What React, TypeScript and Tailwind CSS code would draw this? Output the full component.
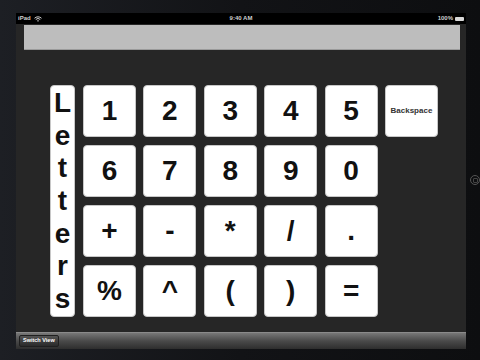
import React from 'react';

const keys = ['1', '2', '3', '4', '5', '6', '7', '8', '9', '0', '+', '-', '*', '/', '.', '%', '^', '(', ')', '='];
const letters = ['L', 'e', 't', 't', 'e', 'r', 's'];

const WifiIcon = () => (
  <svg width="8" height="6" viewBox="0 0 16 12" className="ml-[3px]">
    <path d="M1 4.5a10 10 0 0 1 14 0" stroke="#cfcfcf" strokeWidth="2" fill="none" />
    <path d="M3.5 7a6.5 6.5 0 0 1 9 0" stroke="#cfcfcf" strokeWidth="2" fill="none" />
    <path d="M8 11.5l-2.2-2.2a3.2 3.2 0 0 1 4.4 0z" fill="#cfcfcf" />
  </svg>
);

const Key = ({ label }: { label: string }) => (
  <button className="w-[53px] h-[52px] rounded-[4px] bg-white border border-[#c8c8c8] flex items-center justify-center text-[28px] font-bold text-[#111] leading-none">
    {label}
  </button>
);

export default function App() {
  return (
    <div
      className="w-[480px] h-[360px] flex bg-gradient-to-r from-[#1d1f24] via-[#121316] to-[#0d0e10] pt-[13px] pl-[16px] overflow-hidden"
      style={{ fontFamily: '"Liberation Sans", Arial, sans-serif' }}
    >
      <div className="w-[452px] h-[336px] flex flex-col bg-black">
        {/* status bar */}
        <div className="h-[11px] flex items-center justify-between px-[2px] text-[6px] text-[#cfcfcf] font-bold">
          <div className="flex items-center w-[60px]">
            <span>iPad</span>
            <WifiIcon />
          </div>
          <span>9:40 AM</span>
          <div className="flex items-center justify-end w-[60px]">
            <span>100%</span>
            <div className="ml-[2px] w-[9px] h-[4px] bg-[#d8d8d8] rounded-[1px]" />
          </div>
        </div>

        {/* app content */}
        <div className="flex-1 bg-[#262626] flex flex-col">
          <div className="mt-[1px] ml-[8px] w-[436px] h-[25px] bg-[#bdbdbd] border-b border-[#9a9a9a]" />

          <div className="flex mt-[35px] ml-[34px] gap-[8px]">
            <div className="w-[25px] h-[232px] rounded-[4px] bg-white border border-[#c8c8c8] flex flex-col items-center justify-between py-[1px] text-[28px] font-bold text-[#111] leading-[32px]">
              {letters.map((l, i) => (
                <span key={i}>{l}</span>
              ))}
            </div>

            <div className="flex gap-x-[7.4px]">
              <div className="grid grid-cols-5 gap-x-[7.4px] gap-y-[8px]">
                {keys.map((k) => (
                  <Key key={k} label={k} />
                ))}
              </div>
              <div>
                <button className="w-[53px] h-[52px] rounded-[4px] bg-white border border-[#c8c8c8] flex items-center justify-center text-[8px] font-bold text-[#333]">
                  Backspace
                </button>
              </div>
            </div>
          </div>
        </div>

        {/* toolbar */}
        <div className="h-[17px] bg-gradient-to-b from-[#777] via-[#4a4a4a] to-[#2e2e2e] flex items-center px-[3px] border-t border-[#8a8a8a]">
          <button className="h-[12px] px-[3px] rounded-[2px] bg-gradient-to-b from-[#555] to-[#2a2a2a] border border-[#1f1f1f] text-[5.5px] font-bold text-white leading-none">
            Switch View
          </button>
        </div>
      </div>

      {/* home button on bezel */}
      <div className="flex-1 flex items-start pt-[162px] pl-[4px]">
        <div className="w-[10px] h-[10px] rounded-full border border-[#555] flex items-center justify-center">
          <div className="w-[5px] h-[5px] rounded-[1px] border border-[#444]" />
        </div>
      </div>
    </div>
  );
}
